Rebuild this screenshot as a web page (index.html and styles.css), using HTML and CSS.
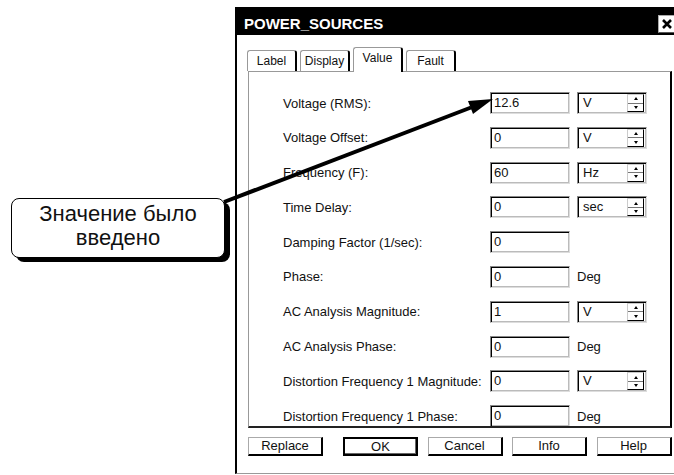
FILE: index.html
```html
<!DOCTYPE html>
<html lang="ru">
<head>
    <meta charset="UTF-8">
    <title>POWER_SOURCES</title>
    <link rel="stylesheet" href="styles.css">
</head>
<body>
    <div class="canvas">
        <div class="note-area">
            <div class="note">Значение было<br>введено</div>
        </div>
        <div class="dialog">
            <div class="titlebar">
                <span class="title">POWER_SOURCES</span>
                <span class="close">
                    <svg width="12" height="12" viewBox="0 0 12 12"><path d="M2 2 L10 10 M10 2 L2 10" stroke="#000" stroke-width="2.6"/></svg>
                </span>
            </div>
            <div class="tabs">
                <div class="tab">Label</div>
                <div class="tab">Display</div>
                <div class="tab active">Value</div>
                <div class="tab">Fault</div>
            </div>
            <div class="panel">
                <div class="row">
                    <span class="label">Voltage (RMS):</span>
                    <span class="field">12.6</span>
                    <span class="select">V<span class="spin"><i class="up"></i><i class="down"></i></span></span>
                </div>
                <div class="row">
                    <span class="label">Voltage Offset:</span>
                    <span class="field">0</span>
                    <span class="select">V<span class="spin"><i class="up"></i><i class="down"></i></span></span>
                </div>
                <div class="row">
                    <span class="label">Frequency (F):</span>
                    <span class="field">60</span>
                    <span class="select">Hz<span class="spin"><i class="up"></i><i class="down"></i></span></span>
                </div>
                <div class="row">
                    <span class="label">Time Delay:</span>
                    <span class="field">0</span>
                    <span class="select">sec<span class="spin"><i class="up"></i><i class="down"></i></span></span>
                </div>
                <div class="row">
                    <span class="label">Damping Factor (1/sec):</span>
                    <span class="field">0</span>
                </div>
                <div class="row">
                    <span class="label">Phase:</span>
                    <span class="field">0</span>
                    <span class="unit">Deg</span>
                </div>
                <div class="row">
                    <span class="label">AC Analysis Magnitude:</span>
                    <span class="field">1</span>
                    <span class="select">V<span class="spin"><i class="up"></i><i class="down"></i></span></span>
                </div>
                <div class="row">
                    <span class="label">AC Analysis Phase:</span>
                    <span class="field">0</span>
                    <span class="unit">Deg</span>
                </div>
                <div class="row">
                    <span class="label">Distortion Frequency 1 Magnitude:</span>
                    <span class="field">0</span>
                    <span class="select">V<span class="spin"><i class="up"></i><i class="down"></i></span></span>
                </div>
                <div class="row">
                    <span class="label">Distortion Frequency 1 Phase:</span>
                    <span class="field">0</span>
                    <span class="unit">Deg</span>
                </div>
            </div>
            <div class="buttons">
                <div class="btn">Replace</div>
                <div class="btn default">OK</div>
                <div class="btn">Cancel</div>
                <div class="btn">Info</div>
                <div class="btn">Help</div>
            </div>
        </div>
    </div>
    <svg class="pointer" width="674" height="475">
        <line x1="224" y1="202" x2="471" y2="107.5" stroke="#000" stroke-width="4"/>
        <polygon points="493,99 468,101 473,114" fill="#000"/>
    </svg>
</body>
</html>
```

FILE: styles.css
```css
body {
    margin: 0;
    width: 674px;
    height: 475px;
    overflow: hidden;
    position: relative;
    background-color: #fff;
    color: #111;
    font-family: "Liberation Sans", Arial, sans-serif;
}
.canvas {
    display: flex;
    align-items: flex-start;
}
.note-area {
    flex: none;
    width: 235px;
}
.note {
    margin: 198px 0 0 11px;
    width: 214px;
    height: 60px;
    box-sizing: border-box;
    padding-top: 3px;
    border: 1px solid #000;
    border-radius: 8px;
    box-shadow: 5px 4px 0 #000;
    background-color: #fff;
    text-align: center;
    font-size: 22px;
    line-height: 24px;
}
.dialog {
    flex: none;
    width: 445px;
    height: 467px;
    margin-top: 7px;
    box-sizing: border-box;
    border-left: 2px solid #000;
    border-bottom: 1px solid #999;
    background-color: #fff;
}
.titlebar {
    height: 28px;
    box-sizing: border-box;
    padding: 0 4px 2px 7px;
    display: flex;
    align-items: flex-end;
    justify-content: space-between;
    background-color: #000;
}
.title {
    margin-bottom: 2px;
    color: #fff;
    font-weight: bold;
    font-size: 15px;
    line-height: 15px;
}
.close {
    width: 18px;
    height: 18px;
    box-sizing: border-box;
    border: 1px solid #aaa;
    border-right-color: #555;
    border-bottom-color: #555;
    background-color: #fff;
    display: flex;
    align-items: center;
    justify-content: center;
}
.tabs {
    height: 24px;
    margin-top: 12px;
    padding-left: 10px;
    display: flex;
    align-items: flex-end;
    position: relative;
    z-index: 1;
}
.tab {
    width: 50px;
    height: 21px;
    margin-right: 3px;
    box-sizing: border-box;
    border: 1px solid #999;
    border-right: 2px solid #000;
    border-bottom: none;
    border-radius: 3px 3px 0 0;
    background-color: #fff;
    text-align: center;
    font-size: 12px;
    line-height: 20px;
}
.tab.active {
    height: 25px;
    margin-bottom: -1px;
    line-height: 20px;
}
.panel {
    height: 357px;
    margin: 0 8px 0 11px;
    box-sizing: border-box;
    padding: 20px 0 0 34px;
    border-top: 1px solid #999;
    border-left: 1px solid #999;
    border-right: 2px solid #000;
    border-bottom: 2px solid #222;
    display: flex;
    flex-direction: column;
    gap: 12.8px;
    overflow: hidden;
}
.row {
    flex: none;
    height: 22px;
    display: flex;
    align-items: center;
    font-size: 13px;
}
.label {
    width: 207px;
    flex: none;
}
.field,
.select {
    height: 22px;
    box-sizing: border-box;
    border: 1px solid;
    border-color: #888 #ddd #ddd #888;
    box-shadow: inset 1px 1px 0 #000, inset -1px -1px 0 #bbb;
    line-height: 20px;
}
.field {
    width: 80px;
    padding-left: 3px;
}
.select {
    width: 70px;
    margin-left: 7px;
    padding-left: 5px;
    display: flex;
}
.unit {
    margin-left: 7px;
}
.spin {
    margin: 1px 2px 1px auto;
    width: 17px;
    box-sizing: border-box;
    border: 1px solid #ccc;
    border-right-color: #000;
    border-bottom-color: #000;
    display: flex;
    flex-direction: column;
}
.spin i {
    flex: 1;
    display: flex;
    align-items: center;
    justify-content: center;
}
.spin i + i {
    border-top: 1px solid #777;
}
.spin .up::after {
    content: "";
    border: 2px solid transparent;
    border-bottom: 3px solid #000;
    border-top: none;
}
.spin .down::after {
    content: "";
    border: 2px solid transparent;
    border-top: 3px solid #000;
    border-bottom: none;
}
.buttons {
    margin-top: 9px;
    padding-left: 11px;
    display: flex;
    gap: 9.5px;
}
.btn {
    width: 75px;
    height: 19px;
    box-sizing: border-box;
    border: 1px solid #aaa;
    border-right: 2px solid #000;
    border-bottom: 2px solid #000;
    text-align: center;
    font-size: 13px;
    line-height: 16px;
}
.btn.default {
    margin-left: 10.5px;
    border: 2px solid #000;
    box-shadow: inset -1px -1px 0 #666;
    line-height: 15px;
}
.pointer {
    position: absolute;
    top: 0;
    left: 0;
    pointer-events: none;
}
```
